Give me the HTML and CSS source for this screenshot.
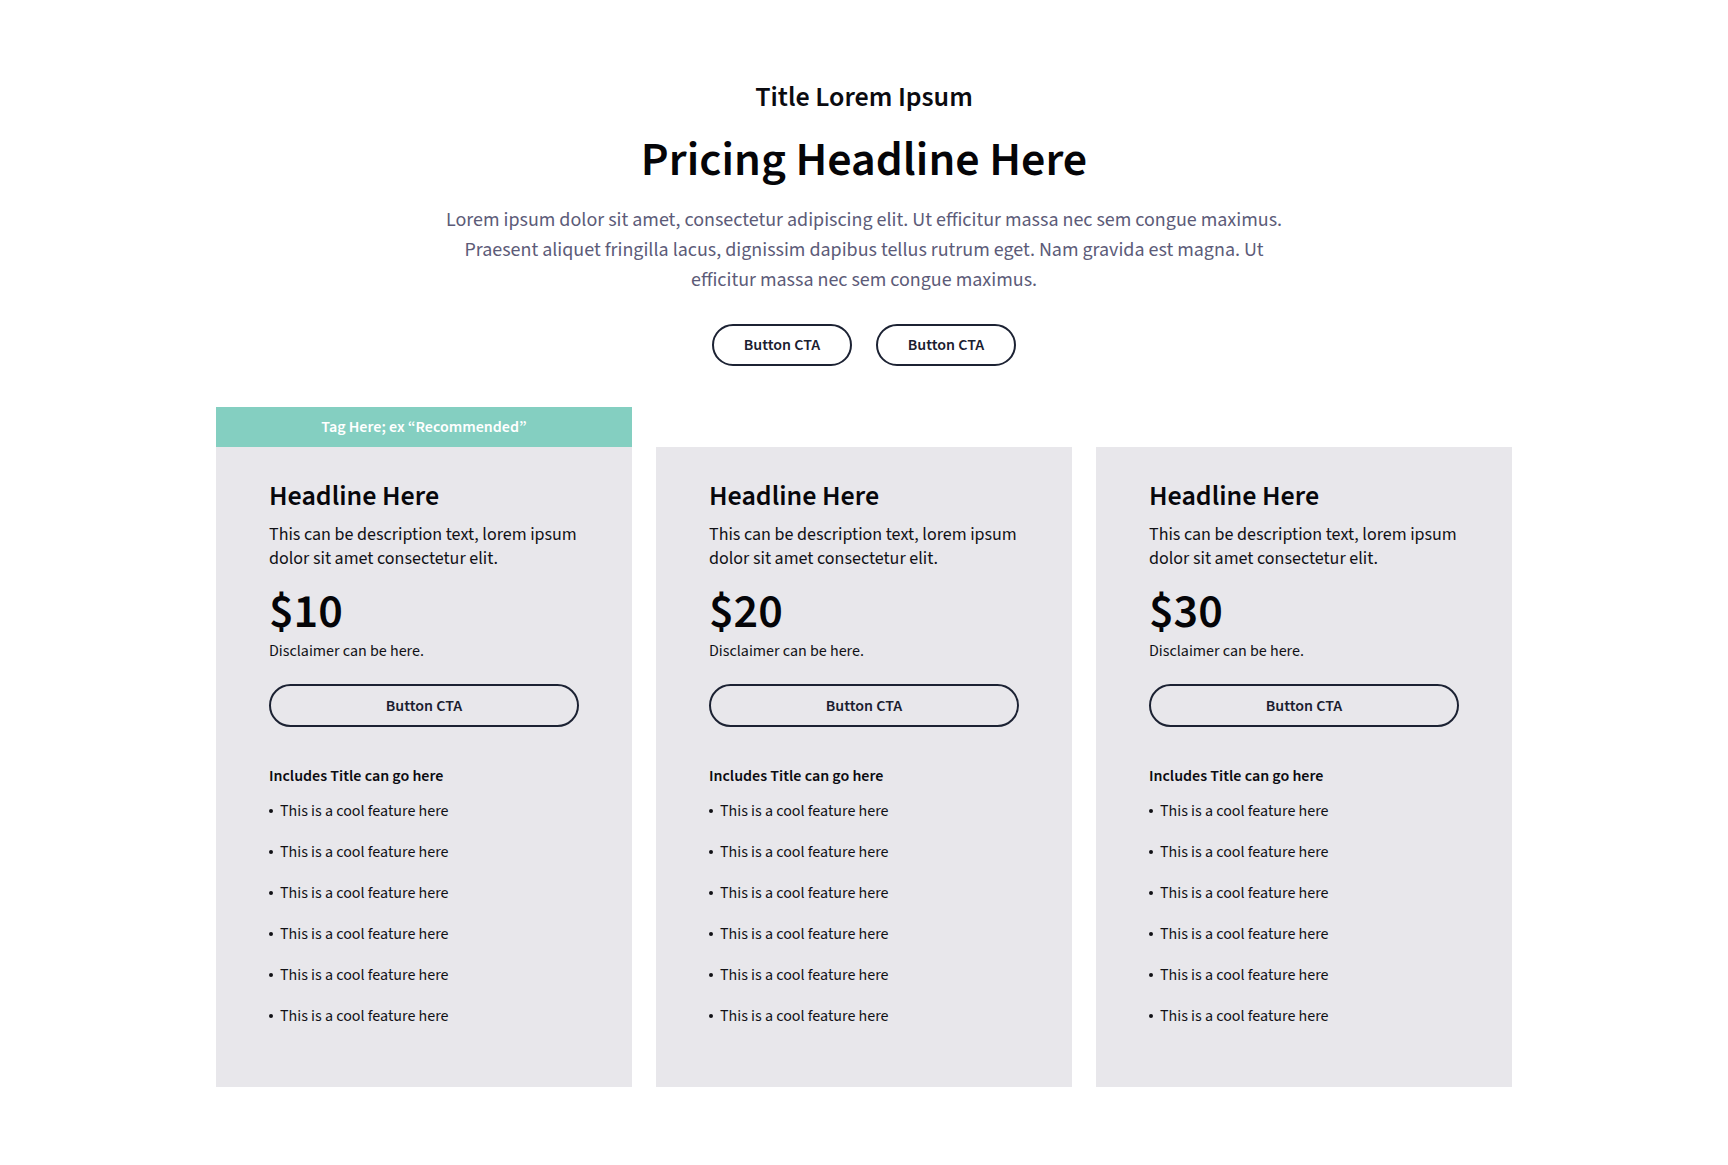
FILE: index.html
```html
<!DOCTYPE html>
<html lang="en">
<head>
<meta charset="utf-8">
<title>Pricing</title>
<link rel="stylesheet" href="styles.css">
</head>
<body>
<main class="page">
  <header class="intro">
    <h2 class="eyebrow">Title Lorem Ipsum</h2>
    <h1 class="headline">Pricing Headline Here</h1>
    <p class="lead">Lorem ipsum dolor sit amet, consectetur adipiscing elit. Ut efficitur massa nec sem congue maximus. Praesent aliquet fringilla lacus, dignissim dapibus tellus rutrum eget. Nam gravida est magna. Ut efficitur massa nec sem congue maximus.</p>
    <div class="actions">
      <a class="btn btn-small" href="#">Button CTA</a>
      <a class="btn btn-small" href="#">Button CTA</a>
    </div>
  </header>

  <section class="plans">
    <div class="plan">
      <div class="tag">Tag Here; ex “Recommended”</div>
      <div class="plan-body">
        <h3 class="plan-title">Headline Here</h3>
        <p class="plan-desc">This can be description text, lorem ipsum dolor sit amet consectetur elit.</p>
        <div class="price">$10</div>
        <p class="disclaimer">Disclaimer can be here.</p>
        <a class="btn btn-wide" href="#">Button CTA</a>
        <h4 class="includes">Includes Title can go here</h4>
        <ul class="features">
          <li>This is a cool feature here</li>
          <li>This is a cool feature here</li>
          <li>This is a cool feature here</li>
          <li>This is a cool feature here</li>
          <li>This is a cool feature here</li>
          <li>This is a cool feature here</li>
        </ul>
      </div>
    </div>
    <div class="plan">
      <div class="plan-body">
        <h3 class="plan-title">Headline Here</h3>
        <p class="plan-desc">This can be description text, lorem ipsum dolor sit amet consectetur elit.</p>
        <div class="price">$20</div>
        <p class="disclaimer">Disclaimer can be here.</p>
        <a class="btn btn-wide" href="#">Button CTA</a>
        <h4 class="includes">Includes Title can go here</h4>
        <ul class="features">
          <li>This is a cool feature here</li>
          <li>This is a cool feature here</li>
          <li>This is a cool feature here</li>
          <li>This is a cool feature here</li>
          <li>This is a cool feature here</li>
          <li>This is a cool feature here</li>
        </ul>
      </div>
    </div>
    <div class="plan">
      <div class="plan-body">
        <h3 class="plan-title">Headline Here</h3>
        <p class="plan-desc">This can be description text, lorem ipsum dolor sit amet consectetur elit.</p>
        <div class="price">$30</div>
        <p class="disclaimer">Disclaimer can be here.</p>
        <a class="btn btn-wide" href="#">Button CTA</a>
        <h4 class="includes">Includes Title can go here</h4>
        <ul class="features">
          <li>This is a cool feature here</li>
          <li>This is a cool feature here</li>
          <li>This is a cool feature here</li>
          <li>This is a cool feature here</li>
          <li>This is a cool feature here</li>
          <li>This is a cool feature here</li>
        </ul>
      </div>
    </div>
  </section>
</main>
</body>
</html>
```

FILE: styles.css
```css
* { box-sizing: border-box; }

html, body {
  margin: 0;
  padding: 0;
  background: #ffffff;
}

body {
  font-family: "Source Sans 3", "Source Sans Pro", Lato, "Noto Sans", sans-serif;
  color: #0d0d12;
}

.page {
  display: flex;
  flex-direction: column;
  align-items: center;
  padding-top: 80px;
}

.intro {
  display: flex;
  flex-direction: column;
  align-items: center;
  text-align: center;
}

.eyebrow {
  margin: 0;
  font-size: 28px;
  line-height: 34px;
  font-weight: 600;
  color: #0b0b10;
}

.headline {
  margin: 17px 0 0;
  font-size: 48px;
  line-height: 58px;
  font-weight: 600;
  color: #050508;
}

.lead {
  margin: 16px 0 0;
  width: 852px;
  font-size: 20px;
  line-height: 30px;
  color: #5c5b78;
}

.actions {
  display: flex;
  gap: 24px;
  margin-top: 29px;
}

.btn {
  display: flex;
  align-items: center;
  justify-content: center;
  border: 2px solid #1c2233;
  border-radius: 999px;
  color: #1a2030;
  font-weight: 600;
  font-size: 16px;
  text-decoration: none;
}

.btn-small {
  width: 140px;
  height: 42px;
}

.plans {
  display: flex;
  align-items: flex-end;
  gap: 24px;
  margin-top: 41px;
}

.plan {
  width: 416px;
  display: flex;
  flex-direction: column;
}

.tag {
  height: 40px;
  background: #84cfc1;
  color: #ffffff;
  font-weight: 600;
  font-size: 16px;
  display: flex;
  align-items: center;
  justify-content: center;
}

.plan-body {
  background: #e8e7eb;
  height: 640px;
  padding: 31px 53px 0;
  display: flex;
  flex-direction: column;
}

.plan-title {
  margin: 0;
  font-size: 28px;
  line-height: 36px;
  font-weight: 600;
  color: #07070b;
}

.plan-desc {
  margin: 9px 0 0;
  font-size: 18px;
  line-height: 24px;
  color: #111116;
}

.price {
  margin-top: 15px;
  font-size: 48px;
  line-height: 52px;
  font-weight: 600;
  color: #050508;
}

.disclaimer {
  margin: 2px 0 0;
  font-size: 16px;
  line-height: 22px;
  color: #111116;
}

.btn-wide {
  width: 100%;
  height: 43px;
  margin-top: 22px;
}

.includes {
  margin: 38px 0 0;
  font-size: 16px;
  line-height: 22px;
  font-weight: 600;
  color: #0b0b10;
}

.features {
  list-style: none;
  margin: 13px 0 0;
  padding: 0;
  display: flex;
  flex-direction: column;
  gap: 19px;
}

.features li {
  display: flex;
  align-items: center;
  font-size: 16px;
  line-height: 22px;
  color: #111116;
}

.features li::before {
  content: "";
  width: 4px;
  height: 4px;
  border-radius: 50%;
  background: #111116;
  margin-right: 7px;
  flex: none;
}
```
